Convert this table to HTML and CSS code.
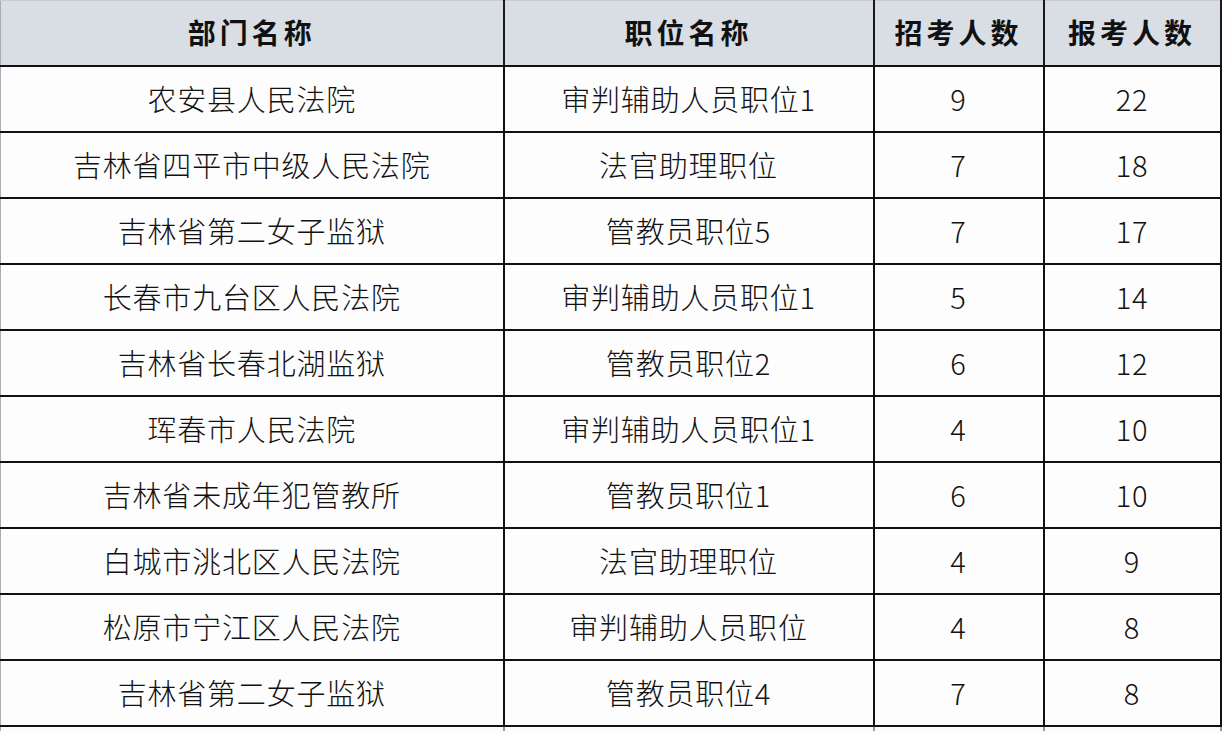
FILE: index.html
```html
<!DOCTYPE html>
<html lang="zh-CN">
<head>
<meta charset="utf-8">
<title>报考人数</title>
<link rel="stylesheet" href="styles.css">
</head>
<body>
<table class="grid">
  <colgroup>
    <col class="c-dept">
    <col class="c-pos">
    <col class="c-num">
    <col class="c-apply">
  </colgroup>
  <thead>
    <tr class="head">
      <th>部门名称</th>
      <th>职位名称</th>
      <th>招考人数</th>
      <th>报考人数</th>
    </tr>
  </thead>
  <tbody>
    <tr><td>农安县人民法院</td><td>审判辅助人员职位1</td><td>9</td><td>22</td></tr>
    <tr><td>吉林省四平市中级人民法院</td><td>法官助理职位</td><td>7</td><td>18</td></tr>
    <tr><td>吉林省第二女子监狱</td><td>管教员职位5</td><td>7</td><td>17</td></tr>
    <tr><td>长春市九台区人民法院</td><td>审判辅助人员职位1</td><td>5</td><td>14</td></tr>
    <tr><td>吉林省长春北湖监狱</td><td>管教员职位2</td><td>6</td><td>12</td></tr>
    <tr><td>珲春市人民法院</td><td>审判辅助人员职位1</td><td>4</td><td>10</td></tr>
    <tr><td>吉林省未成年犯管教所</td><td>管教员职位1</td><td>6</td><td>10</td></tr>
    <tr><td>白城市洮北区人民法院</td><td>法官助理职位</td><td>4</td><td>9</td></tr>
    <tr><td>松原市宁江区人民法院</td><td>审判辅助人员职位</td><td>4</td><td>8</td></tr>
    <tr><td>吉林省第二女子监狱</td><td>管教员职位4</td><td>7</td><td>8</td></tr>
    <tr class="tail"><td></td><td></td><td></td><td></td></tr>
  </tbody>
</table>
</body>
</html>
```

FILE: styles.css
```css
html, body {
  margin: 0;
  padding: 0;
  background: #fdfdfd;
  overflow: hidden;
  height: 734px;
}

.grid {
  border-collapse: collapse;
  table-layout: fixed;
  width: 1220px;
  font-family: "Noto Sans CJK SC", "Noto Sans", sans-serif;
  color: #111;
}

.c-dept { width: 503px; }
.c-pos { width: 370px; }
.c-num { width: 170px; }
.c-apply { width: 177px; }

.head th {
  height: 62px;
  padding: 0 0 2px;
  background: #d9dde4;
  font-size: 28px;
  font-weight: 700;
  letter-spacing: 4px;
  text-align: center;
  vertical-align: middle;
  border-left: 2px solid #1a1a1a;
  border-right: 2px solid #1a1a1a;
  border-bottom: 2px solid #111;
  border-top: 1px solid #c8ccd2;
}

.head th:first-child {
  border-left: 1px solid #a8adb5;
}

tbody td {
  height: 61px;
  padding: 0 0 3px;
  font-size: 29px;
  font-weight: 300;
  letter-spacing: 0.8px;
  text-align: center;
  vertical-align: middle;
  border: 2px solid #111;
  white-space: nowrap;
}

tbody td:first-child {
  border-left: 1px solid #a8adb5;
}

.tail td {
  height: 4px;
  padding: 0;
  border-bottom: none;
  border-left-color: #999;
  border-right-color: #999;
}
```
